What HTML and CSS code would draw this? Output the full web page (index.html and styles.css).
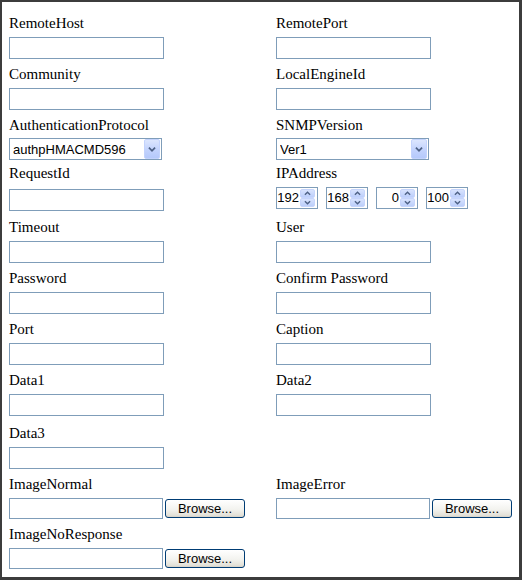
FILE: index.html
```html
<!DOCTYPE html>
<html>
<head>
<meta charset="utf-8">
<link rel="stylesheet" href="styles.css">
</head>
<body>
<div class="frame">
  <div class="form">
    <div class="field"><label class="lbl">RemoteHost</label><input class="txt" type="text"></div>
    <div class="field"><label class="lbl">RemotePort</label><input class="txt" type="text"></div>

    <div class="field"><label class="lbl">Community</label><input class="txt" type="text"></div>
    <div class="field"><label class="lbl">LocalEngineId</label><input class="txt" type="text"></div>

    <div class="field"><label class="lbl lbl-short">AuthenticationProtocol</label>
      <div class="sel">
        <select><option>authpHMACMD596</option></select>
        <span class="arrow"><svg width="16" height="20" viewBox="0 0 16 20"><path d="M4.5 8.5 L8 12 L11.5 8.5" fill="none" stroke="#4d6185" stroke-width="2"/></svg></span>
      </div>
    </div>
    <div class="field"><label class="lbl lbl-short">SNMPVersion</label>
      <div class="sel">
        <select><option>Ver1</option></select>
        <span class="arrow"><svg width="16" height="20" viewBox="0 0 16 20"><path d="M4.5 8.5 L8 12 L11.5 8.5" fill="none" stroke="#4d6185" stroke-width="2"/></svg></span>
      </div>
    </div>

    <div class="field drop"><label class="lbl lbl-tall">RequestId</label><input class="txt" type="text"></div>
    <div class="field drop"><label class="lbl">IPAddress</label>
      <div class="ip">
        <div class="spin"><span class="val">192</span><span class="btns"><span class="up"><svg width="15" height="9" viewBox="0 0 15 9"><path d="M4.5 6 L7.5 3 L10.5 6" fill="none" stroke="#4d6185" stroke-width="1.6"/></svg></span><span class="dn"><svg width="15" height="9" viewBox="0 0 15 9"><path d="M4.5 3 L7.5 6 L10.5 3" fill="none" stroke="#4d6185" stroke-width="1.6"/></svg></span></span></div>
        <div class="spin"><span class="val">168</span><span class="btns"><span class="up"><svg width="15" height="9" viewBox="0 0 15 9"><path d="M4.5 6 L7.5 3 L10.5 6" fill="none" stroke="#4d6185" stroke-width="1.6"/></svg></span><span class="dn"><svg width="15" height="9" viewBox="0 0 15 9"><path d="M4.5 3 L7.5 6 L10.5 3" fill="none" stroke="#4d6185" stroke-width="1.6"/></svg></span></span></div>
        <div class="spin"><span class="val">0</span><span class="btns"><span class="up"><svg width="15" height="9" viewBox="0 0 15 9"><path d="M4.5 6 L7.5 3 L10.5 6" fill="none" stroke="#4d6185" stroke-width="1.6"/></svg></span><span class="dn"><svg width="15" height="9" viewBox="0 0 15 9"><path d="M4.5 3 L7.5 6 L10.5 3" fill="none" stroke="#4d6185" stroke-width="1.6"/></svg></span></span></div>
        <div class="spin"><span class="val">100</span><span class="btns"><span class="up"><svg width="15" height="9" viewBox="0 0 15 9"><path d="M4.5 6 L7.5 3 L10.5 6" fill="none" stroke="#4d6185" stroke-width="1.6"/></svg></span><span class="dn"><svg width="15" height="9" viewBox="0 0 15 9"><path d="M4.5 3 L7.5 6 L10.5 3" fill="none" stroke="#4d6185" stroke-width="1.6"/></svg></span></span></div>
      </div>
    </div>

    <div class="field"><label class="lbl">Timeout</label><input class="txt" type="text"></div>
    <div class="field"><label class="lbl">User</label><input class="txt" type="text"></div>

    <div class="field"><label class="lbl">Password</label><input class="txt" type="password"></div>
    <div class="field"><label class="lbl">Confirm Password</label><input class="txt" type="password"></div>

    <div class="field"><label class="lbl">Port</label><input class="txt" type="text"></div>
    <div class="field"><label class="lbl">Caption</label><input class="txt" type="text"></div>

    <div class="field"><label class="lbl">Data1</label><input class="txt" type="text"></div>
    <div class="field"><label class="lbl">Data2</label><input class="txt" type="text"></div>

    <div class="field gap2"><label class="lbl">Data3</label><input class="txt" type="text"></div>
    <div class="field gap2"></div>

    <div class="field"><label class="lbl">ImageNormal</label>
      <div class="filerow"><input class="txt file" type="text"><button class="browse" type="button">Browse...</button></div>
    </div>
    <div class="field"><label class="lbl">ImageError</label>
      <div class="filerow"><input class="txt file" type="text"><button class="browse" type="button">Browse...</button></div>
    </div>

    <div class="field"><label class="lbl">ImageNoResponse</label>
      <div class="filerow"><input class="txt file" type="text"><button class="browse" type="button">Browse...</button></div>
    </div>
  </div>
</div>
</body>
</html>
```
FILE: styles.css
```css
html, body {
  margin: 0;
  padding: 0;
  background: #ffffff;
}

.frame {
  width: 522px;
  height: 580px;
  box-sizing: border-box;
  border-style: solid;
  border-color: #3c3c3c;
  border-width: 2px 3px 3px 2px;
  padding: 12px 0 0 7px;
  font: 15px/18px "Liberation Serif", "Times New Roman", serif;
  color: #000;
  overflow: hidden;
}

.form {
  display: grid;
  grid-template-columns: 267px 236px;
  row-gap: 6px;
}

.field {
  display: flex;
  flex-direction: column;
  align-items: flex-start;
}

.gap2 {
  margin-top: 2px;
}

.drop {
  margin-top: -2px;
  margin-bottom: 1px;
}

.lbl {
  display: block;
  height: 18px;
  margin-bottom: 5px;
  white-space: nowrap;
}

.lbl-short {
  margin-bottom: 4px;
}

.lbl-tall {
  margin-bottom: 7px;
}

.txt {
  width: 155px;
  height: 22px;
  box-sizing: border-box;
  margin: 0;
  padding: 0 2px;
  border: 1px solid #7f9db9;
  background: #fff;
  font: 13px "Liberation Sans", Arial, sans-serif;
  outline: none;
}

/* select */
.sel {
  position: relative;
  width: 153px;
  height: 22px;
}

.sel select {
  -webkit-appearance: none;
  appearance: none;
  width: 153px;
  height: 22px;
  box-sizing: border-box;
  margin: 0;
  padding: 0 0 0 3px;
  border: 1px solid #7f9db9;
  border-radius: 0;
  background: #fff;
  color: #000;
  font: 13px "Liberation Sans", Arial, sans-serif;
  outline: none;
}

.sel .arrow {
  position: absolute;
  top: 1px;
  right: 2px;
  width: 16px;
  height: 20px;
  box-sizing: border-box;
  border: 1px solid #c3d3fd;
  border-radius: 2px;
  background: linear-gradient(#dce6fe, #c4d4fd 50%, #b5c9fb);
  display: flex;
  align-items: center;
  justify-content: center;
}

.sel .arrow svg {
  display: block;
}

/* ip spinners */
.ip {
  display: flex;
  gap: 8px;
}

.spin {
  width: 42px;
  height: 22px;
  box-sizing: border-box;
  border: 1px solid #7f9db9;
  display: flex;
  align-items: center;
  background: #fff;
}

.spin .val {
  flex: 1;
  text-align: right;
  font: 13px/16px "Liberation Sans", Arial, sans-serif;
  padding-right: 1px;
}

.spin .btns {
  width: 15px;
  height: 18px;
  margin-right: 2px;
  display: flex;
  flex-direction: column;
}

.spin .up,
.spin .dn {
  height: 9px;
  box-sizing: border-box;
  border: 1px solid #c6d5fc;
  border-radius: 2px;
  background: linear-gradient(#d8e3fe, #bccffb);
  display: flex;
  align-items: center;
  justify-content: center;
}

.spin svg {
  display: block;
}

/* file rows */
.filerow {
  display: flex;
  align-items: center;
  gap: 2px;
}

.txt.file {
  width: 154px;
  height: 21px;
}

.browse {
  width: 80px;
  height: 19px;
  box-sizing: border-box;
  margin: 0;
  padding: 0;
  border: 1px solid #003c74;
  border-radius: 3px;
  background: linear-gradient(#ffffff, #f3f3ef 55%, #e3e1d8 90%, #d6d0c5);
  color: #000;
  font: 13px/15px "Liberation Sans", Arial, sans-serif;
}
```
